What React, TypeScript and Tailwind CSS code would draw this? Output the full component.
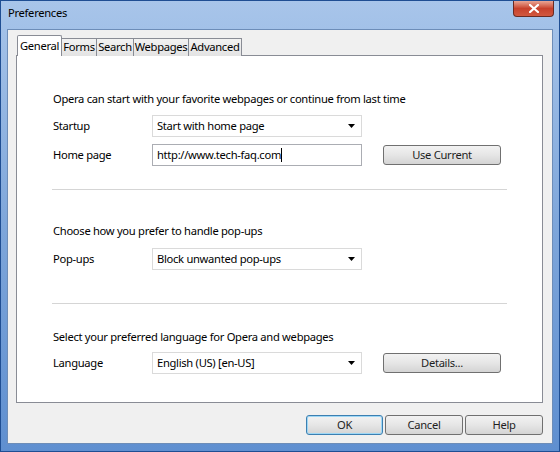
import React from 'react';

const tabs = [
  { label: 'General', width: 'w-[45px]' },
  { label: 'Forms', width: 'w-[35px]' },
  { label: 'Search', width: 'w-[37px]' },
  { label: 'Webpages', width: 'w-[55px]' },
  { label: 'Advanced', width: 'w-[53px]' },
];

const Arrow = () => (
  <svg width="7" height="4" viewBox="0 0 7 4" className="flex-none">
    <path d="M0 0h7L3.5 4z" fill="#000" />
  </svg>
);

const Select = ({ value }: { value: string }) => (
  <div className="w-[210px] h-[22px] flex flex-row items-center justify-between bg-white border border-[#dadada] pl-[4px] pr-[6px]">
    <span>{value}</span>
    <Arrow />
  </div>
);

const Button = ({ label, width, focused }: { label: string; width: string; focused?: boolean }) => (
  <div
    className={`${width} h-[20px] flex items-center justify-center rounded-[3px] border ${
      focused ? 'border-[#3c7fb1] shadow-[inset_0_0_0_1px_#9ed7f5]' : 'border-[#707070]'
    } bg-linear-to-b from-[#f2f2f2] via-[#e6e6e6] to-[#d4d4d4] text-[#1e1e1e]`}
  >
    {label}
  </div>
);

const Row = ({ label, children }: { label: string; children: React.ReactNode }) => (
  <div className="flex flex-row items-center h-[22px]">
    <span className="w-[99px] flex-none">{label}</span>
    {children}
  </div>
);

const Separator = () => <div className="h-px bg-[#d5d5d5] ml-[35px] mr-[35px]" />;

export default function App() {
  return (
    <div
      className="w-[560px] h-[452px] flex flex-col bg-linear-to-b from-[#a8c5ea] via-[#7ea6da] to-[#5f8fd0] border border-[#1f4e93] text-[11.2px] tracking-[-0.3px] text-black"
      style={{ fontFamily: '"Noto Sans", "Open Sans", sans-serif' }}
    >
      <div className="h-[28px] flex flex-row items-start justify-between pl-[7px]">
        <span className="mt-[4px]">Preferences</span>
        <div className="w-[41px] h-[16px] mr-[5px] rounded-b-[4px] border border-t-0 border-[#6a2a22] bg-linear-to-b from-[#e8a595] via-[#c7412c] to-[#d2583f] flex items-center justify-center">
          <svg width="10" height="9" viewBox="0 0 10 9">
            <path d="M1 1l8 7M9 1L1 8" stroke="#fff" strokeWidth="2.2" strokeLinecap="square" />
          </svg>
        </div>
      </div>
      <div className="flex-1 mx-[6px] mb-[7px] bg-[#f0f0f0] border border-[#6d8db8] flex flex-col pt-[5px] pl-[9px] pr-[9px]">
        <div className="flex flex-row items-end h-[21px] relative z-10">
          {tabs.map((t, i) =>
            i === 0 ? (
              <div
                key={t.label}
                className={`${t.width} h-[21px] bg-white border border-b-0 border-[#898c95] flex items-center justify-center rounded-t-[2px]`}
              >
                {t.label}
              </div>
            ) : (
              <div
                key={t.label}
                className={`${t.width} h-[18px] border border-l-0 border-b-0 border-[#898c95] bg-linear-to-b from-[#f2f2f2] to-[#e3e3e3] flex items-center justify-center whitespace-nowrap`}
              >
                {t.label}
              </div>
            )
          )}
        </div>
        <div className="h-[348px] -mt-px -ml-px bg-white border border-[#898c95] flex flex-col">
          <div className="flex flex-col pl-[36px] pt-[35px]">
            <div className="h-[16px] leading-[16px]">Opera can start with your favorite webpages or continue from last time</div>
            <div className="mt-[8px]">
              <Row label="Startup">
                <Select value="Start with home page" />
              </Row>
            </div>
            <div className="mt-[7px]">
              <Row label="Home page">
                <div className="w-[210px] h-[22px] flex items-center bg-white border border-[#abadb3] pl-[4px]">
                  <span>http://www.tech-faq.com</span>
                  <span className="w-px h-[14px] bg-black" />
                </div>
                <div className="ml-[21px]">
                  <Button label="Use Current" width="w-[118px]" />
                </div>
              </Row>
            </div>
          </div>
          <div className="mt-[23px]">
            <Separator />
          </div>
          <div className="flex flex-col pl-[36px] pt-[33px]">
            <div className="h-[16px] leading-[16px]">Choose how you prefer to handle pop-ups</div>
            <div className="mt-[9px]">
              <Row label="Pop-ups">
                <Select value="Block unwanted pop-ups" />
              </Row>
            </div>
          </div>
          <div className="mt-[33px]">
            <Separator />
          </div>
          <div className="flex flex-col pl-[36px] pt-[25px]">
            <div className="h-[16px] leading-[16px]">Select your preferred language for Opera and webpages</div>
            <div className="mt-[7px]">
              <Row label="Language">
                <Select value="English (US) [en-US]" />
                <div className="ml-[21px]">
                  <Button label="Details..." width="w-[118px]" />
                </div>
              </Row>
            </div>
          </div>
        </div>
        <div className="flex flex-row justify-end gap-[2px] mt-[12px]">
          <Button label="OK" width="w-[77px]" focused />
          <Button label="Cancel" width="w-[78px]" />
          <Button label="Help" width="w-[78px]" />
        </div>
      </div>
    </div>
  );
}
